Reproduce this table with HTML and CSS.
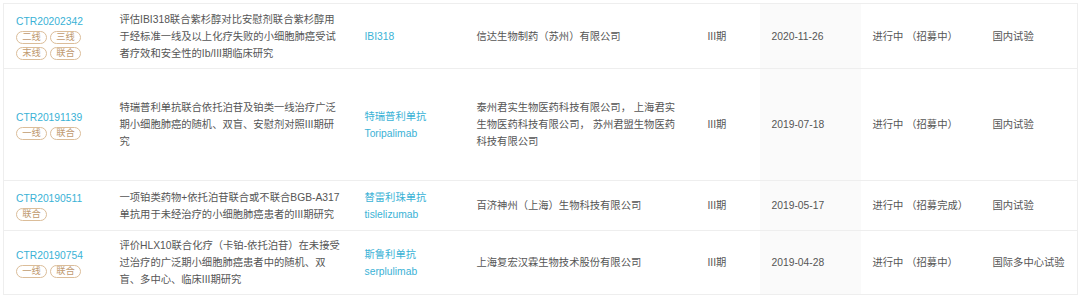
FILE: index.html
```html
<!DOCTYPE html>
<html lang="zh-CN">
<head>
<meta charset="utf-8">
<title>临床试验</title>
<link rel="stylesheet" href="styles.css">
</head>
<body>
<div class="wrap">
<table class="trials">
  <colgroup>
    <col class="c-id"><col class="c-title"><col class="c-drug"><col class="c-co"><col class="c-phase"><col class="c-date"><col class="c-status"><col class="c-type">
  </colgroup>
  <tbody>
    <tr class="r1">
      <td><a class="link">CTR20202342</a>
        <div class="tags"><span class="tag">二线</span><span class="tag">三线</span><span class="tag">末线</span><span class="tag">联合</span></div></td>
      <td>评估IBI318联合紫杉醇对比安慰剂联合紫杉醇用于经标准一线及以上化疗失败的小细胞肺癌受试者疗效和安全性的Ib/III期临床研究</td>
      <td><span class="link">IBI318</span></td>
      <td>信达生物制药（苏州）有限公司</td>
      <td>III期</td>
      <td class="date">2020-11-26</td>
      <td>进行中 （招募中）</td>
      <td>国内试验</td>
    </tr>
    <tr class="r2">
      <td><a class="link">CTR20191139</a>
        <div class="tags"><span class="tag">一线</span><span class="tag">联合</span></div></td>
      <td>特瑞普利单抗联合依托泊苷及铂类一线治疗广泛期小细胞肺癌的随机、双盲、安慰剂对照III期研究</td>
      <td><span class="link block">特瑞普利单抗</span><span class="link block">Toripalimab</span></td>
      <td>泰州君实生物医药科技有限公司， 上海君实生物医药科技有限公司， 苏州君盟生物医药科技有限公司</td>
      <td>III期</td>
      <td class="date">2019-07-18</td>
      <td>进行中 （招募中）</td>
      <td>国内试验</td>
    </tr>
    <tr class="r3">
      <td><a class="link">CTR20190511</a>
        <div class="tags"><span class="tag">联合</span></div></td>
      <td>一项铂类药物+依托泊苷联合或不联合BGB-A317单抗用于未经治疗的小细胞肺癌患者的III期研究</td>
      <td><span class="link block">替雷利珠单抗</span><span class="link block">tislelizumab</span></td>
      <td>百济神州（上海）生物科技有限公司</td>
      <td>III期</td>
      <td class="date">2019-05-17</td>
      <td>进行中 （招募完成）</td>
      <td>国内试验</td>
    </tr>
    <tr class="r4">
      <td><a class="link">CTR20190754</a>
        <div class="tags"><span class="tag">一线</span><span class="tag">联合</span></div></td>
      <td>评价HLX10联合化疗（卡铂-依托泊苷）在未接受过治疗的广泛期小细胞肺癌患者中的随机、双盲、多中心、临床III期研究</td>
      <td><span class="link block">斯鲁利单抗</span><span class="link block">serplulimab</span></td>
      <td>上海复宏汉霖生物技术股份有限公司</td>
      <td>III期</td>
      <td class="date">2019-04-28</td>
      <td>进行中 （招募中）</td>
      <td>国际多中心试验</td>
    </tr>
  </tbody>
</table>
</div>
</body>
</html>
```

FILE: styles.css
```css
html, body {
  margin: 0;
  padding: 0;
  background: #fff;
}
.wrap {
  padding: 3px 0 0 3px;
}
.trials {
  border-collapse: collapse;
  table-layout: fixed;
  width: 1075px;
  font-family: "Liberation Sans", "Noto Sans CJK SC", sans-serif;
  font-size: 10.3px;
  line-height: 17px;
  color: #555;
  border-left: 1px solid #eeeeee;
  border-right: 1px solid #eeeeee;
}
.c-id { width: 104px; }
.c-title { width: 245px; }
.c-drug { width: 112px; }
.c-co { width: 231px; }
.c-phase { width: 64px; }
.c-date { width: 101px; }
.c-status { width: 120px; }
.c-type { width: 97px; }
.trials td {
  border-top: 1px solid #eeeeee;
  border-bottom: 1px solid #eeeeee;
  padding: 0 12px;
  vertical-align: middle;
  word-break: break-all;
}
.r1 { height: 65px; }
.r2 { height: 112px; }
.r3 { height: 50px; }
.r4 { height: 64px; }
.trials td.date {
  background: #fafafa;
}
.link {
  color: #3ab2d6;
  text-decoration: none;
}
.block {
  display: block;
}
.tags {
  display: flex;
  flex-wrap: wrap;
  gap: 3px;
  margin-top: 1px;
  width: 70px;
}
.tag {
  box-sizing: border-box;
  width: 31px;
  height: 13px;
  border: 1px solid #dbbd99;
  border-radius: 7px;
  color: #c09a70;
  font-size: 9.3px;
  line-height: 11px;
  text-align: center;
}
```
